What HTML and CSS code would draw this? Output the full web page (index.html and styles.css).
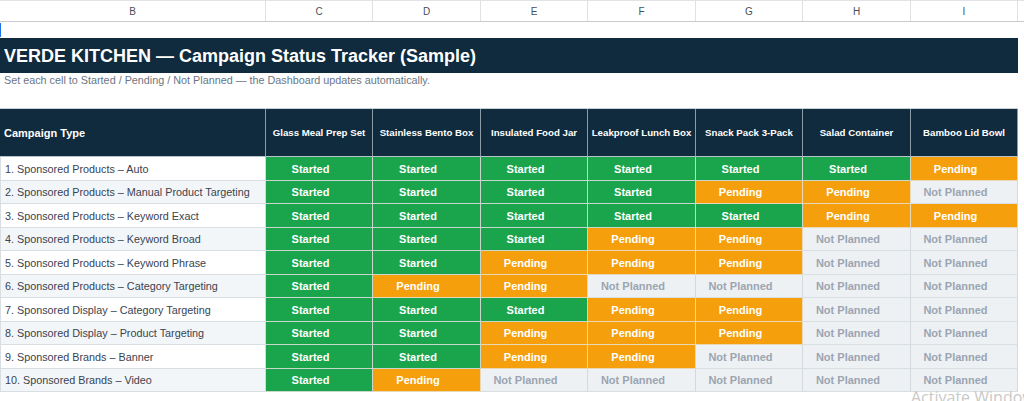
FILE: index.html
```html
<!DOCTYPE html>
<html>
<head>
<meta charset="utf-8">
<link rel="stylesheet" href="styles.css">
</head>
<body>
<div class="sheet">
  <div class="cols">
    <div class="col">B</div><div class="col">C</div><div class="col">D</div><div class="col">E</div><div class="col">F</div><div class="col">G</div><div class="col">H</div><div class="col">I</div><div class="col rest"></div>
  </div>
  <div class="blank"><span class="sel"></span></div>
  <div class="title">VERDE KITCHEN — Campaign Status Tracker (Sample)</div>
  <div class="sub">Set each cell to Started / Pending / Not Planned — the Dashboard updates automatically.</div>
  <div class="gap"></div>
  <div class="grid">
    <div class="hd first">Campaign Type</div>
    <div class="hd">Glass Meal Prep Set</div>
    <div class="hd">Stainless Bento Box</div>
    <div class="hd">Insulated Food Jar</div>
    <div class="hd">Leakproof Lunch Box</div>
    <div class="hd">Snack Pack 3-Pack</div>
    <div class="hd">Salad Container</div>
    <div class="hd">Bamboo Lid Bowl</div>

    <div class="lbl">1. Sponsored Products – Auto</div>
    <div class="st s">Started</div><div class="st s">Started</div><div class="st s">Started</div><div class="st s">Started</div><div class="st s">Started</div><div class="st s">Started</div><div class="st p">Pending</div>

    <div class="lbl alt">2. Sponsored Products – Manual Product Targeting</div>
    <div class="st s">Started</div><div class="st s">Started</div><div class="st s">Started</div><div class="st s">Started</div><div class="st p">Pending</div><div class="st p">Pending</div><div class="st n">Not Planned</div>

    <div class="lbl">3. Sponsored Products – Keyword Exact</div>
    <div class="st s">Started</div><div class="st s">Started</div><div class="st s">Started</div><div class="st s">Started</div><div class="st s">Started</div><div class="st p">Pending</div><div class="st p">Pending</div>

    <div class="lbl alt">4. Sponsored Products – Keyword Broad</div>
    <div class="st s">Started</div><div class="st s">Started</div><div class="st s">Started</div><div class="st p">Pending</div><div class="st p">Pending</div><div class="st n">Not Planned</div><div class="st n">Not Planned</div>

    <div class="lbl">5. Sponsored Products – Keyword Phrase</div>
    <div class="st s">Started</div><div class="st s">Started</div><div class="st p">Pending</div><div class="st p">Pending</div><div class="st p">Pending</div><div class="st n">Not Planned</div><div class="st n">Not Planned</div>

    <div class="lbl alt">6. Sponsored Products – Category Targeting</div>
    <div class="st s">Started</div><div class="st p">Pending</div><div class="st p">Pending</div><div class="st n">Not Planned</div><div class="st n">Not Planned</div><div class="st n">Not Planned</div><div class="st n">Not Planned</div>

    <div class="lbl">7. Sponsored Display – Category Targeting</div>
    <div class="st s">Started</div><div class="st s">Started</div><div class="st s">Started</div><div class="st p">Pending</div><div class="st p">Pending</div><div class="st n">Not Planned</div><div class="st n">Not Planned</div>

    <div class="lbl alt">8. Sponsored Display – Product Targeting</div>
    <div class="st s">Started</div><div class="st s">Started</div><div class="st p">Pending</div><div class="st p">Pending</div><div class="st p">Pending</div><div class="st n">Not Planned</div><div class="st n">Not Planned</div>

    <div class="lbl">9. Sponsored Brands – Banner</div>
    <div class="st s">Started</div><div class="st s">Started</div><div class="st p">Pending</div><div class="st p">Pending</div><div class="st n">Not Planned</div><div class="st n">Not Planned</div><div class="st n">Not Planned</div>

    <div class="lbl alt">10. Sponsored Brands – Video</div>
    <div class="st s">Started</div><div class="st p">Pending</div><div class="st n">Not Planned</div><div class="st n">Not Planned</div><div class="st n">Not Planned</div><div class="st n">Not Planned</div><div class="st n">Not Planned</div>
  </div>
</div>
<div class="watermark">Activate Windows</div>
</body>
</html>
```
FILE: styles.css
```css
html, body {
  margin: 0;
  padding: 0;
  background: #ffffff;
  overflow: hidden;
}
body {
  width: 1024px;
  height: 401px;
  font-family: "Liberation Sans", Arial, sans-serif;
  position: relative;
}
.sheet {
  width: 1024px;
}
.cols {
  display: grid;
  grid-template-columns: 266px 107px 108px 107px 108px 107px 108px 107px 6px;
  height: 22px;
  box-sizing: border-box;
  border-top: 1px solid #e2e3e5;
  border-bottom: 1px solid #c9cccf;
}
.col {
  display: flex;
  align-items: center;
  justify-content: center;
  font-size: 10px;
  color: #4a4f55;
  border-right: 1px solid #dfe1e4;
}
.col.rest {
  border-right: none;
}
.blank {
  height: 16px;
  position: relative;
}
.sel {
  position: absolute;
  left: 0;
  top: 1px;
  width: 1px;
  height: 14px;
  background: #1a73e8;
}
.title {
  width: 1018px;
  height: 35px;
  box-sizing: border-box;
  background: #0f2b3d;
  color: #ffffff;
  font-weight: bold;
  font-size: 18px;
  display: flex;
  align-items: center;
  padding-left: 4px;
  padding-top: 1px;
}
.sub {
  height: 15px;
  font-size: 10.8px;
  color: #6b7684;
  padding-left: 4px;
  line-height: 15px;
}
.gap {
  height: 20px;
}
.grid {
  display: grid;
  width: 1018px;
  grid-template-columns: 266px 107px 108px 107px 108px 107px 108px 107px;
  grid-template-rows: 48px 24px 23px 24px 23px 24px 23px 24px 23px 24px 23px;
  border-top: 1px solid #c9d0d6;
  box-sizing: border-box;
}
.grid > div {
  box-sizing: border-box;
  border-right: 1px solid #d3d9de;
  border-bottom: 1px solid #d9dee3;
  display: flex;
  align-items: center;
  white-space: nowrap;
  overflow: hidden;
}
.hd {
  background: #0f2b3d;
  color: #ffffff;
  font-weight: bold;
  font-size: 9.7px;
  justify-content: center;
  border-right-color: #8d9ba6 !important;
  border-bottom-color: #b8c2c9 !important;
}
.hd.first {
  justify-content: flex-start;
  padding-left: 4px;
  font-size: 11px;
}
.lbl {
  background: #ffffff;
  color: #3a4350;
  font-size: 10.8px;
  padding-left: 4px;
  border-left: 1px solid #d9dee3;
}
.lbl.alt {
  background: #f3f6f8;
}
.st {
  justify-content: center;
  padding-right: 17px;
  font-size: 11px;
  font-weight: bold;
}
.st.s {
  background: #1aa44b;
  color: #ffffff;
  border-color: #c8d6cc !important;
}
.st.p {
  background: #f59f0c;
  color: #ffffff;
  border-color: #e8d8b8 !important;
}
.st.n {
  background: #eef1f4;
  color: #9ba5b1;
}
.watermark {
  position: absolute;
  left: 911px;
  top: 386px;
  font-family: "Open Sans", "Noto Sans", sans-serif;
  font-size: 16px;
  color: #c9c9c9;
  white-space: nowrap;
}
```
